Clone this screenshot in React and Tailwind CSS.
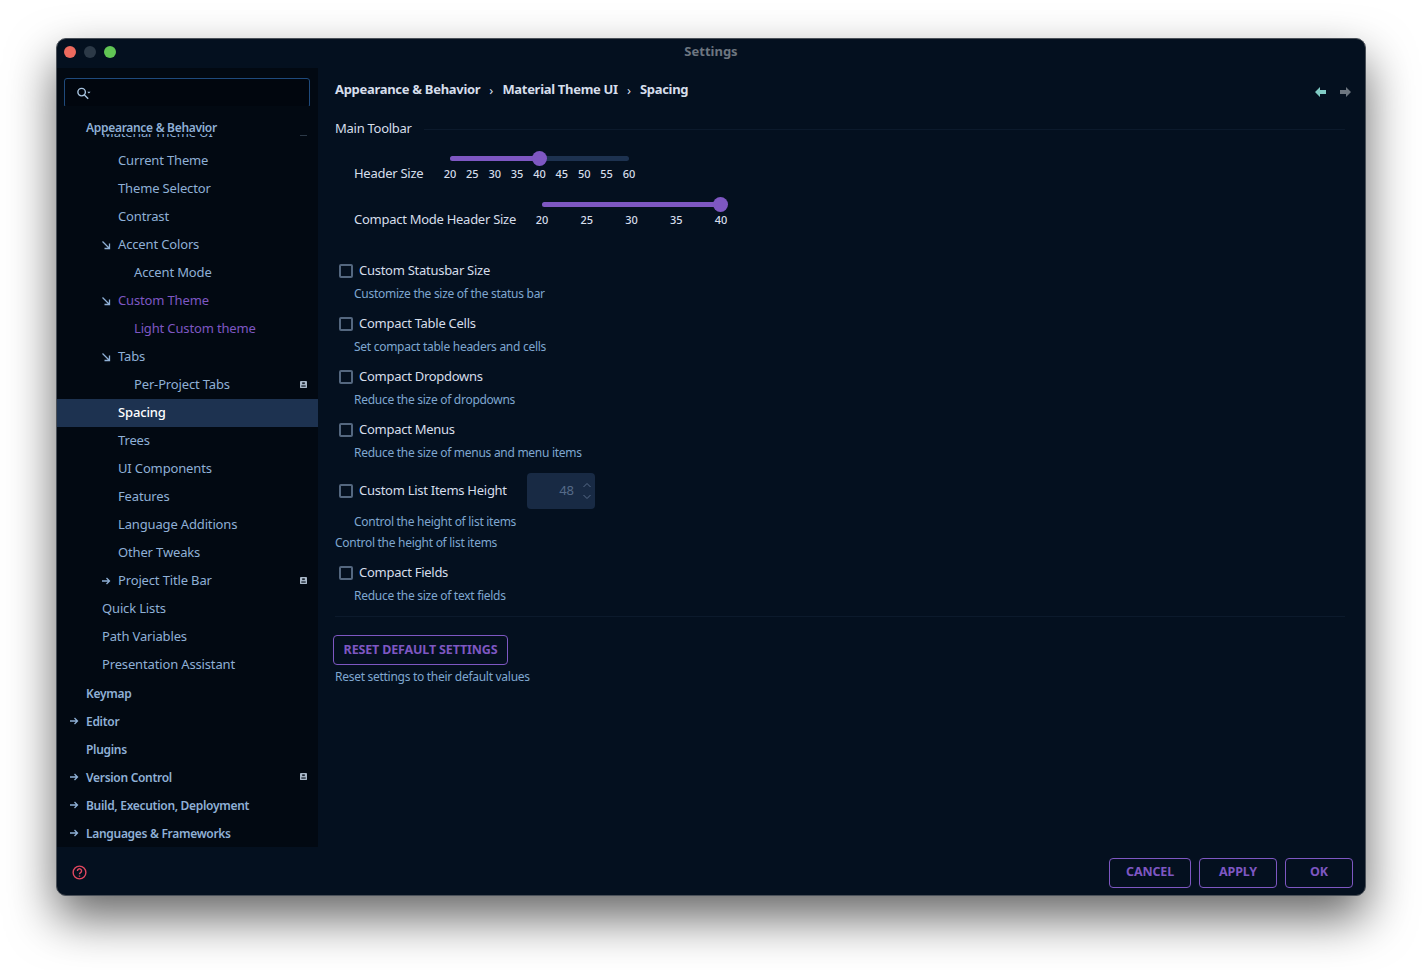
import React from 'react';

const treeRows = [
  { label: 'Material Theme UI', indent: 'pl-[45px]', badge: false },
  { label: 'Current Theme', indent: 'pl-[61px]' },
  { label: 'Theme Selector', indent: 'pl-[61px]' },
  { label: 'Contrast', indent: 'pl-[61px]' },
  { label: 'Accent Colors', indent: 'pl-[61px]', arrow: 'open' },
  { label: 'Accent Mode', indent: 'pl-[77px]' },
  { label: 'Custom Theme', indent: 'pl-[61px]', arrow: 'open', purple: true },
  { label: 'Light Custom theme', indent: 'pl-[77px]', purple: true },
  { label: 'Tabs', indent: 'pl-[61px]', arrow: 'open' },
  { label: 'Per-Project Tabs', indent: 'pl-[77px]', badge: true },
  { label: 'Spacing', indent: 'pl-[61px]', selected: true },
  { label: 'Trees', indent: 'pl-[61px]' },
  { label: 'UI Components', indent: 'pl-[61px]' },
  { label: 'Features', indent: 'pl-[61px]' },
  { label: 'Language Additions', indent: 'pl-[61px]' },
  { label: 'Other Tweaks', indent: 'pl-[61px]' },
  { label: 'Project Title Bar', indent: 'pl-[61px]', arrow: 'closed', badge: true },
  { label: 'Quick Lists', indent: 'pl-[45px]' },
  { label: 'Path Variables', indent: 'pl-[45px]' },
  { label: 'Presentation Assistant', indent: 'pl-[45px]' },
  { label: 'Keymap', indent: 'pl-[29px]', top: true },
  { label: 'Editor', indent: 'pl-[29px]', arrow: 'closed', top: true },
  { label: 'Plugins', indent: 'pl-[29px]', top: true },
  { label: 'Version Control', indent: 'pl-[29px]', arrow: 'closed', badge: true, top: true },
  { label: 'Build, Execution, Deployment', indent: 'pl-[29px]', arrow: 'closed', top: true },
  { label: 'Languages & Frameworks', indent: 'pl-[29px]', arrow: 'closed', top: true },
];

const checks = [
  { label: 'Custom Statusbar Size', desc: 'Customize the size of the status bar' },
  { label: 'Compact Table Cells', desc: 'Set compact table headers and cells' },
  { label: 'Compact Dropdowns', desc: 'Reduce the size of dropdowns' },
  { label: 'Compact Menus', desc: 'Reduce the size of menus and menu items' },
];

const labelText = 'text-[13px] tracking-[-0.27px] text-[#d6deeb]';
const descText = 'text-[12px] tracking-[-0.28px] leading-[20px] text-[#7fa7d0]';
const crumbText = 'text-[13px] font-bold tracking-[-0.3px] text-[#d6deeb]';

const TreeArrow = ({ open }) => (
  <svg viewBox="0 0 10 10" className="absolute top-[9px] -ml-[17px] w-[10px] h-[10px] text-[#8fb0d6]" fill="none" stroke="currentColor" strokeWidth="1.3">
    {open ? <path d="M1.500 1.500l6.500 6.500M8.500 3.500v5h-5" /> : <path d="M1 5h7.500M5.500 2l3 3-3 3" />}
  </svg>
);

const ProjectBadge = () => (
  <svg viewBox="0 0 8 8" className="absolute right-[11px] top-[10px] w-[7px] h-[7px]">
    <rect width="8" height="8" rx="1" fill="#a9b8c9" />
    <rect x="2.500" y="1.500" width="3" height="2" fill="#1b2430" />
    <rect x="1.500" y="5" width="5" height="1.500" fill="#1b2430" />
  </svg>
);

const TreeRow = ({ row }) => (
  <div className={`relative h-7 flex items-center ${row.indent} ${row.selected ? 'bg-[#1d3250] text-white font-medium' : row.purple ? 'text-[#7e57c2]' : 'text-[#8fb0d6]'} ${row.top ? 'text-[12px] font-semibold tracking-[-0.3px] pt-[2px]' : 'text-[13px] tracking-[-0.15px]'}`}>
    {row.arrow && <TreeArrow open={row.arrow === 'open'} />}
    <span>{row.label}</span>
    {row.badge && <ProjectBadge />}
  </div>
);

const Slider = ({ labels, percent, width }) => (
  <div className={`${width} -mt-[2px]`}>
    <div className="relative h-[5px] rounded-full bg-[#1d3250]">
      <div className="h-full rounded-full bg-[#7e57c2]" style={{ width: `${percent}%` }} />
      <div className="absolute top-[-5px] -ml-2 w-[15px] h-[15px] rounded-full bg-[#7e57c2]" style={{ left: `${percent}%` }} />
    </div>
    <div className="flex justify-between mt-[5px] text-[11px] font-medium leading-[16px] text-[#d6deeb]">
      {labels.map((l) => (
        <span key={l} className="w-0 flex justify-center">{l}</span>
      ))}
    </div>
  </div>
);

const CheckBox = () => (
  <span className="w-[14px] h-[14px] ml-1 border-2 border-[#54677f] rounded-[2px] shrink-0" />
);

const OutlineButton = ({ children, className }) => (
  <button className={`h-[30px] border-[1.5px] border-[#7e57c2] rounded-[4px] text-[#7e57c2] text-[12.5px] tracking-[-0.15px] font-bold flex items-center justify-center ${className}`}>
    {children}
  </button>
);

export default function App() {
  return (
    <div className="h-[970px] w-[1422px] bg-white pt-[38px] pl-[56px] overflow-hidden" style={{ fontFamily: '"Noto Sans", sans-serif' }}>
      <div className="w-[1310px] h-[858px] rounded-[10px] bg-[#04101f] border border-[#4a5058] shadow-[0_22px_48px_rgba(0,0,0,0.6)] flex flex-col overflow-hidden">
        {/* Title bar */}
        <div className="relative h-[29px] shrink-0 flex items-center justify-center pb-[3px]">
          <div className="absolute left-[7px] top-[7px] flex gap-2">
            <span className="w-3 h-3 rounded-full bg-[#ed6a5e]" />
            <span className="w-3 h-3 rounded-full bg-[#2c3947]" />
            <span className="w-3 h-3 rounded-full bg-[#61c554]" />
          </div>
          <span className="text-[13px] font-bold text-[#6d7680]">Settings</span>
        </div>

        <div className="flex flex-1 min-h-0">
          {/* Sidebar */}
          <div className="relative w-[261px] shrink-0 bg-[#020912] overflow-hidden">
            <div className="h-[51px] pl-[7px] pr-2 pt-[10px]">
              <div className="h-[30px] border border-[#1f4a7c] rounded-[3px] bg-[#01060e] flex items-center pl-[11px]">
                <svg viewBox="0 0 16 16" className="w-[15px] h-[15px] text-[#a8c4e0]" fill="none" stroke="currentColor" strokeWidth="1.5">
                  <circle cx="6" cy="6.500" r="4" />
                  <path d="M9 9.500l4 4" />
                  <path d="M12 6h3.500l-1.750 2z" fill="currentColor" stroke="none" />
                </svg>
              </div>
            </div>
            <div>
              {treeRows.map((row) => (
                <TreeRow key={row.label} row={row} />
              ))}
            </div>
            {/* pinned group header */}
            <div className="absolute left-0 right-0 top-[38px] h-[28px] bg-[#020912] flex items-center pl-[29px] pt-[16px] text-[12px] font-semibold tracking-[-0.3px] text-[#8fb0d6]">
              Appearance &amp; Behavior
            </div>
            <div className="absolute left-[243px] top-[67px] w-[7px] h-px bg-[#2c3947]" />
          </div>

          {/* Content */}
          <div className="flex-1 pl-[17px] pr-[20px] pt-[11px]">
            <div className="flex items-center h-[22px]">
              <span className={crumbText}>Appearance &amp; Behavior</span>
              <span className="mx-[9px] text-[13px] leading-none text-[#d6deeb]">›</span>
              <span className={crumbText}>Material Theme UI</span>
              <span className="mx-[9px] text-[13px] leading-none text-[#d6deeb]">›</span>
              <span className={crumbText}>Spacing</span>
              <div className="ml-auto -mr-[6px] mt-[3px] flex gap-[14px]">
                <svg viewBox="0 0 11 10" className="w-[11px] h-[10px]"><path d="M0 5l5-5v3h6v4H5v3z" fill="#80cbc4" /></svg>
                <svg viewBox="0 0 11 10" className="w-[11px] h-[10px]"><path d="M11 5L6 0v3H0v4h6v3z" fill="#6d7680" /></svg>
              </div>
            </div>

            <div className="flex items-center h-5 mt-[18px]">
              <span className={labelText}>Main Toolbar</span>
              <div className="flex-1 h-px bg-[#0c1a2c] ml-3" />
            </div>

            <div className="flex mt-[19px] pl-[19px] h-[40px]">
              <span className={`w-[96px] leading-[20px] pt-[5px] ${labelText}`}>Header Size</span>
              <Slider width="w-[179px]" percent={50} labels={[20, 25, 30, 35, 40, 45, 50, 55, 60]} />
            </div>

            <div className="flex mt-[6px] pl-[19px] h-[40px]">
              <span className={`w-[188px] leading-[20px] pt-[5px] ${labelText}`}>Compact Mode Header Size</span>
              <Slider width="w-[179px]" percent={100} labels={[20, 25, 30, 35, 40]} />
            </div>

            <div className="mt-[17px]">
              {checks.map((c) => (
                <div key={c.label} className="h-[53px]">
                  <div className={`flex items-center gap-[6px] h-5 ${labelText}`}>
                    <CheckBox />
                    {c.label}
                  </div>
                  <div className={`pl-[19px] mt-[3px] ${descText}`}>{c.desc}</div>
                </div>
              ))}
            </div>

            <div className={`flex items-center gap-[6px] h-9 ${labelText}`}>
              <CheckBox />
              <span className="w-[162px]">Custom List Items Height</span>
              <div className="w-[68px] h-9 bg-[#182a44] rounded-[4px] flex items-center justify-end pr-[3px] text-[#566a88] text-[13px] tracking-normal">
                <span className="mr-[8px]">48</span>
                <svg viewBox="0 0 10 20" className="w-[10px] h-5 text-[#566a88]" fill="none" stroke="currentColor" strokeWidth="1">
                  <path d="M1.500 6l3.500-3.500L8.500 6M1.500 14L5 17.500 8.500 14" />
                </svg>
              </div>
            </div>
            <div className={`pl-[19px] mt-[3px] ${descText}`}>Control the height of list items</div>
            <div className={`mt-px ${descText}`}>Control the height of list items</div>

            <div className={`flex items-center gap-[6px] h-5 mt-[10px] ${labelText}`}>
              <CheckBox />
              Compact Fields
            </div>
            <div className={`pl-[19px] mt-[3px] ${descText}`}>Reduce the size of text fields</div>

            <div className="h-px bg-[#0c1a2c] mt-[10px]" />

            <OutlineButton className="w-[175px] mt-[18px] -ml-[2px]">RESET DEFAULT SETTINGS</OutlineButton>
            <div className={`mt-[2px] ${descText}`}>Reset settings to their default values</div>
          </div>
        </div>

        {/* Footer */}
        <div className="h-[48px] shrink-0 flex items-center pl-[15px] pr-[12px] pt-[3px]">
          <svg viewBox="0 0 16 16" className="w-[15px] h-[15px] text-[#e0475f]" fill="none" stroke="currentColor" strokeWidth="1.500">
            <circle cx="8" cy="8" r="6.800" />
            <path d="M5.800 6.300a2.200 2.200 0 1 1 3.400 1.800c-.8.500-1.200 1-1.200 1.800" />
            <path d="M8 11.200v1.300" />
          </svg>
          <div className="ml-auto flex gap-2">
            <OutlineButton className="w-[82px]">CANCEL</OutlineButton>
            <OutlineButton className="w-[78px]">APPLY</OutlineButton>
            <OutlineButton className="w-[68px]">OK</OutlineButton>
          </div>
        </div>
      </div>
    </div>
  );
}
